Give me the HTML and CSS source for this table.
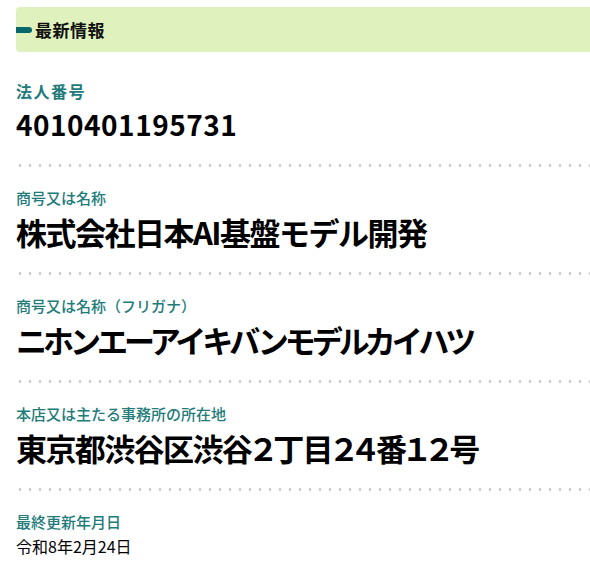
FILE: index.html
```html
<!DOCTYPE html>
<html lang="ja">

<head>
  <meta charset="utf-8">
  <meta name="viewport" content="width=device-width, initial-scale=1">
  <link rel="stylesheet" href="styles.css">
</head>

<body>

  <div class="page">
    <h2 class="heading"><span class="marker"></span>最新情報</h2>

    <div class="item first">
      <div class="label big">法人番号</div>
      <div class="value number">4010401195731</div>
    </div>

    <div class="item">
      <div class="label">商号又は名称</div>
      <div class="value name">株式会社日本AI基盤モデル開発</div>
    </div>

    <div class="item">
      <div class="label">商号又は名称（フリガナ）</div>
      <div class="value kana">ニホンエーアイキバンモデルカイハツ</div>
    </div>

    <div class="item">
      <div class="label">本店又は主たる事務所の所在地</div>
      <div class="value address">東京都渋谷区渋谷２丁目２４番１２号</div>
    </div>

    <div class="item last">
      <div class="label">最終更新年月日</div>
      <div class="date">令和8年2月24日</div>
    </div>
  </div>

</body>

</html>
```

FILE: styles.css
```css
body {
  margin: 0;
  font-family: "Noto Sans CJK JP", "Noto Sans", sans-serif;
  color: #000;
  background: #fff;
}

.page {
  padding: 7px 0 0 16px;
}

.heading {
  display: flex;
  align-items: center;
  gap: 3px;
  height: 45px;
  margin: 0;
  background-color: #dff1bd;
  border-radius: 4px 0 0 4px;
  font-size: 17px;
  font-weight: bold;
  letter-spacing: 0.5px;
  color: #111;
}

.marker {
  width: 16px;
  height: 6px;
  background-color: #06686a;
  border-radius: 0 3px 3px 0;
}

.item {
  padding-top: 21px;
}

.item.first {
  padding-top: 29px;
}

/* dotted separator */
.item::after {
  content: "";
  display: block;
  height: 3px;
  margin-top: 20px;
  background-image: radial-gradient(circle, #cfcfcf 1.2px, transparent 1.6px);
  background-size: 10px 3px;
  background-position: -1px 0;
}

.item.last::after {
  display: none;
}

.label {
  font-size: 15px;
  line-height: 20px;
  font-weight: 500;
  color: #217b79;
}

.label.big {
  font-size: 16px;
  font-weight: bold;
  letter-spacing: 1.5px;
}

.value {
  margin-top: 4px;
  font-size: 31px;
  line-height: 40px;
  font-weight: bold;
}

.value.number {
  margin-top: 3px;
  font-size: 28px;
  letter-spacing: 0.5px;
}

.value.name {
  letter-spacing: -1.5px;
}

.value.kana {
  letter-spacing: -4px;
}

.value.address {
  font-feature-settings: "palt";
  letter-spacing: -1.6px;
}

.date {
  margin-top: 4px;
  font-size: 16px;
  line-height: 20px;
}
```
